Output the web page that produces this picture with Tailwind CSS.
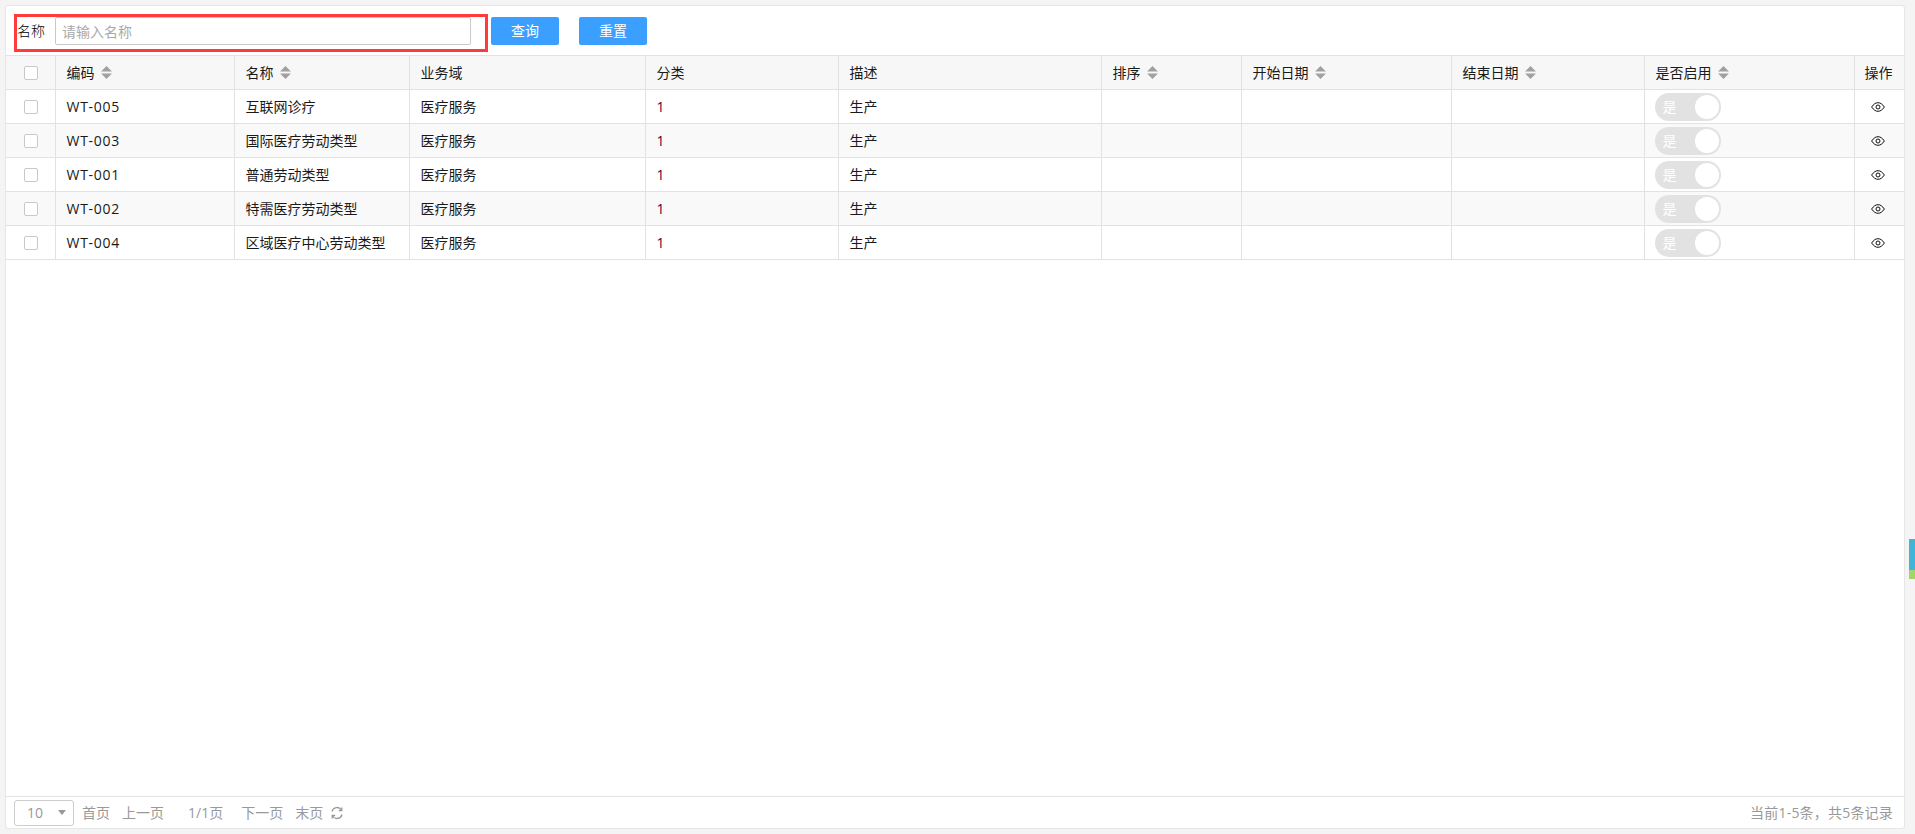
<!DOCTYPE html>
<html lang="zh-CN">
  <head>
    <meta charset="UTF-8" />
    <title>劳动类型</title>
    <script src="https://cdn.jsdelivr.net/npm/@tailwindcss/browser@4"></script>
  </head>
  <body class="relative h-[834px] overflow-hidden bg-[#f4f4f4] font-['Open_Sans','Noto_Sans_CJK_SC',sans-serif] text-sm text-[#1a1a1a]">
    <div class="absolute right-0 top-[539px] flex h-[40px] w-[6px] flex-col">
      <div class="h-[31px] bg-[#3fb5d8]"></div>
      <div class="h-[9px] bg-[#a5d46a]"></div>
    </div>

    <div class="mx-[5px] mt-[5px] flex h-[824px] w-[1900px] flex-col rounded-[3px] border border-[#e6e6e6] bg-white">
      <!-- Search -->
      <div class="relative flex h-[49px] shrink-0 items-center pl-[11px] pt-[1px]">
        <label class="w-[38px] font-light text-black">名称</label>
        <input
          type="text"
          placeholder="请输入名称"
          class="h-[28px] w-[416px] rounded-[2px] border border-[#c9c9c9] px-[6px] text-sm placeholder:text-[#aaa]"
        />
        <button class="ml-[20px] h-[28px] w-[68px] rounded-[2px] bg-[#3a9fff] text-sm text-white">查询</button>
        <button class="ml-[20px] h-[28px] w-[68px] rounded-[2px] bg-[#3a9fff] text-sm text-white">重置</button>
        <div class="absolute left-[8px] top-[8px] h-[38px] w-[474px] border-[3px] border-[#ff3b3b]"></div>
      </div>

      <!-- Table -->
      <div class="flex-1">
        <table class="w-[1898px] table-fixed border-collapse text-left text-sm">
          <colgroup>
            <col class="w-[49px]" /><col class="w-[179px]" /><col class="w-[175px]" /><col class="w-[236px]" />
            <col class="w-[193px]" /><col class="w-[263px]" /><col class="w-[140px]" /><col class="w-[210px]" />
            <col class="w-[193px]" /><col class="w-[210px]" /><col class="w-[50px]" />
          </colgroup>
          <thead class="bg-[#f7f7f7]">
            <tr class="h-[34px] border-y border-[#e2e2e2] [&>th]:border-l [&>th]:border-[#e2e2e2] [&>th]:px-[11px] [&>th]:font-normal">
              <th class="!border-l-0"><span class="ml-[7px] block size-[14px] rounded-[2px] border border-[#c9c9c9] bg-white"></span></th>
              <th><span class="inline-flex items-center gap-[6px]">编码<svg width="11" height="13" viewBox="0 0 10 12" class="fill-[#a0a0a0]"><path d="M5 0l5 5H0zM5 12L0 7h10z" /></svg></span></th>
              <th><span class="inline-flex items-center gap-[6px]">名称<svg width="11" height="13" viewBox="0 0 10 12" class="fill-[#a0a0a0]"><path d="M5 0l5 5H0zM5 12L0 7h10z" /></svg></span></th>
              <th>业务域</th>
              <th>分类</th>
              <th>描述</th>
              <th><span class="inline-flex items-center gap-[6px]">排序<svg width="11" height="13" viewBox="0 0 10 12" class="fill-[#a0a0a0]"><path d="M5 0l5 5H0zM5 12L0 7h10z" /></svg></span></th>
              <th><span class="inline-flex items-center gap-[6px]">开始日期<svg width="11" height="13" viewBox="0 0 10 12" class="fill-[#a0a0a0]"><path d="M5 0l5 5H0zM5 12L0 7h10z" /></svg></span></th>
              <th><span class="inline-flex items-center gap-[6px]">结束日期<svg width="11" height="13" viewBox="0 0 10 12" class="fill-[#a0a0a0]"><path d="M5 0l5 5H0zM5 12L0 7h10z" /></svg></span></th>
              <th><span class="inline-flex items-center gap-[6px]">是否启用<svg width="11" height="13" viewBox="0 0 10 12" class="fill-[#a0a0a0]"><path d="M5 0l5 5H0zM5 12L0 7h10z" /></svg></span></th>
              <th class="!px-[10px]">操作</th>
            </tr>
          </thead>
          <tbody class="[&>tr]:h-[34px] [&>tr]:border-b [&>tr]:border-[#e2e2e2] [&_td]:border-l [&_td]:border-[#e2e2e2] [&_td]:px-[11px] [&>tr:nth-child(even)]:bg-[#f9f9f9]">
            <tr>
              <td class="!border-l-0"><span class="ml-[7px] block size-[14px] rounded-[2px] border border-[#c9c9c9] bg-white"></span></td>
              <td class="tracking-[0.7px]">WT-005</td><td>互联网诊疗</td><td>医疗服务</td><td class="text-[#5a0030]">1</td><td>生产</td><td></td><td></td><td></td>
              <td><span class="ml-[-1px] flex h-[28px] w-[66px] items-center justify-between rounded-full bg-[#e2e2e2] pl-[8px] pr-[2px] text-white">是<span class="size-[24px] rounded-full bg-white"></span></span></td>
              <td class="!px-0"><svg width="14" height="10" viewBox="0 0 14 10" fill="none" stroke="#111" class="ml-[16px]"><path d="M.6 5C2.700 2 4.700.7 7 .7S11.300 2 13.400 5C11.300 8 9.300 9.300 7 9.300S2.700 8 .6 5z" /><circle cx="7" cy="5" r="2" /></svg></td>
            </tr>
            <tr>
              <td class="!border-l-0"><span class="ml-[7px] block size-[14px] rounded-[2px] border border-[#c9c9c9] bg-white"></span></td>
              <td class="tracking-[0.7px]">WT-003</td><td>国际医疗劳动类型</td><td>医疗服务</td><td class="text-[#5a0030]">1</td><td>生产</td><td></td><td></td><td></td>
              <td><span class="ml-[-1px] flex h-[28px] w-[66px] items-center justify-between rounded-full bg-[#e2e2e2] pl-[8px] pr-[2px] text-white">是<span class="size-[24px] rounded-full bg-white"></span></span></td>
              <td class="!px-0"><svg width="14" height="10" viewBox="0 0 14 10" fill="none" stroke="#111" class="ml-[16px]"><path d="M.6 5C2.700 2 4.700.7 7 .7S11.300 2 13.400 5C11.300 8 9.300 9.300 7 9.300S2.700 8 .6 5z" /><circle cx="7" cy="5" r="2" /></svg></td>
            </tr>
            <tr>
              <td class="!border-l-0"><span class="ml-[7px] block size-[14px] rounded-[2px] border border-[#c9c9c9] bg-white"></span></td>
              <td class="tracking-[0.7px]">WT-001</td><td>普通劳动类型</td><td>医疗服务</td><td class="text-[#5a0030]">1</td><td>生产</td><td></td><td></td><td></td>
              <td><span class="ml-[-1px] flex h-[28px] w-[66px] items-center justify-between rounded-full bg-[#e2e2e2] pl-[8px] pr-[2px] text-white">是<span class="size-[24px] rounded-full bg-white"></span></span></td>
              <td class="!px-0"><svg width="14" height="10" viewBox="0 0 14 10" fill="none" stroke="#111" class="ml-[16px]"><path d="M.6 5C2.700 2 4.700.7 7 .7S11.300 2 13.400 5C11.300 8 9.300 9.300 7 9.300S2.700 8 .6 5z" /><circle cx="7" cy="5" r="2" /></svg></td>
            </tr>
            <tr>
              <td class="!border-l-0"><span class="ml-[7px] block size-[14px] rounded-[2px] border border-[#c9c9c9] bg-white"></span></td>
              <td class="tracking-[0.7px]">WT-002</td><td>特需医疗劳动类型</td><td>医疗服务</td><td class="text-[#5a0030]">1</td><td>生产</td><td></td><td></td><td></td>
              <td><span class="ml-[-1px] flex h-[28px] w-[66px] items-center justify-between rounded-full bg-[#e2e2e2] pl-[8px] pr-[2px] text-white">是<span class="size-[24px] rounded-full bg-white"></span></span></td>
              <td class="!px-0"><svg width="14" height="10" viewBox="0 0 14 10" fill="none" stroke="#111" class="ml-[16px]"><path d="M.6 5C2.700 2 4.700.7 7 .7S11.300 2 13.400 5C11.300 8 9.300 9.300 7 9.300S2.700 8 .6 5z" /><circle cx="7" cy="5" r="2" /></svg></td>
            </tr>
            <tr>
              <td class="!border-l-0"><span class="ml-[7px] block size-[14px] rounded-[2px] border border-[#c9c9c9] bg-white"></span></td>
              <td class="tracking-[0.7px]">WT-004</td><td>区域医疗中心劳动类型</td><td>医疗服务</td><td class="text-[#5a0030]">1</td><td>生产</td><td></td><td></td><td></td>
              <td><span class="ml-[-1px] flex h-[28px] w-[66px] items-center justify-between rounded-full bg-[#e2e2e2] pl-[8px] pr-[2px] text-white">是<span class="size-[24px] rounded-full bg-white"></span></span></td>
              <td class="!px-0"><svg width="14" height="10" viewBox="0 0 14 10" fill="none" stroke="#111" class="ml-[16px]"><path d="M.6 5C2.700 2 4.700.7 7 .7S11.300 2 13.400 5C11.300 8 9.300 9.300 7 9.300S2.700 8 .6 5z" /><circle cx="7" cy="5" r="2" /></svg></td>
            </tr>
          </tbody>
        </table>
      </div>

      <!-- Pager -->
      <div class="flex h-[32px] shrink-0 items-center justify-between border-t border-[#e2e2e2] pl-[8px] pr-[11px] text-sm text-[#999]">
        <div class="flex items-center">
          <div class="flex h-[26px] w-[60px] items-center justify-between rounded-[3px] border border-[#ccc] pl-[12px] pr-[7px] text-sm">10<span class="size-0 border-x-[4px] border-t-[5px] border-x-transparent border-t-[#999]"></span></div>
          <span class="ml-[8px]">首页</span>
          <span class="ml-[12px]">上一页</span>
          <span class="ml-[24px]">1/1页</span>
          <span class="ml-[18px]">下一页</span>
          <span class="ml-[12px]">末页</span>
          <svg width="14" height="14" viewBox="0 0 14 14" fill="none" stroke="#999" stroke-width="1.300" class="ml-[7px]"><path d="M2 5.500A5.200 5.200 0 0 1 11.500 4M12 8.500A5.200 5.200 0 0 1 2.500 10" /><path d="M11.800 1.500v3h-3M2.200 12.500v-3h3" /></svg>
        </div>
        <div class="tracking-[0.2px]">当前1-5条，共5条记录</div>
      </div>
    </div>
  </body>
</html>
